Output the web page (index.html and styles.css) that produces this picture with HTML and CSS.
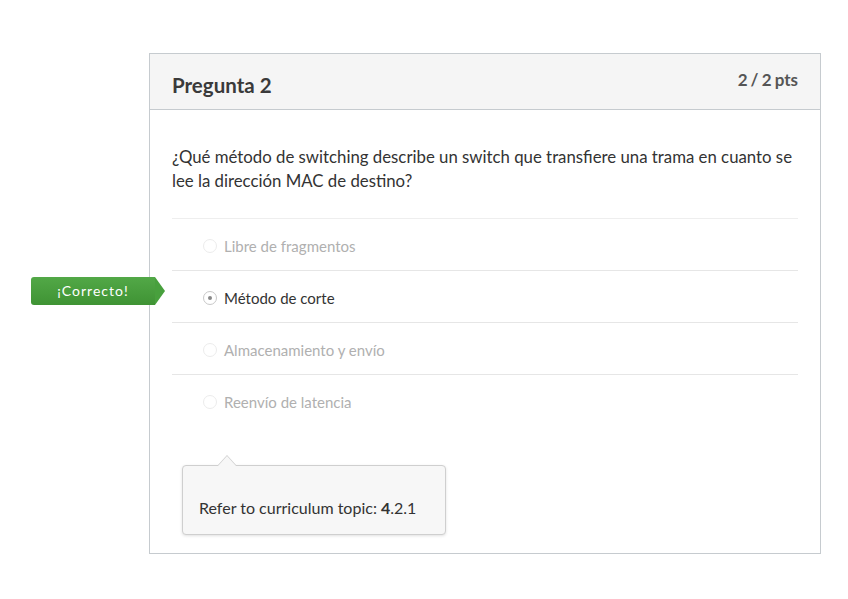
FILE: index.html
```html
<!DOCTYPE html>
<html lang="es">
<head>
<meta charset="utf-8">
<title>Pregunta 2</title>
<link rel="stylesheet" href="styles.css">
</head>
<body>
<div class="page">
  <div class="card">
    <div class="badge">¡Correcto!</div>
    <div class="card-header">
      <h2 class="title">Pregunta 2</h2>
      <div class="pts">2 / 2 pts</div>
    </div>
    <div class="question">¿Qué método de switching describe un switch que transfiere una trama en cuanto se lee la dirección MAC de destino?</div>
    <ul class="answers">
      <li class="answer"><span class="radio"></span>Libre de fragmentos</li>
      <li class="answer selected"><span class="radio"></span>Método de corte</li>
      <li class="answer"><span class="radio"></span>Almacenamiento y envío</li>
      <li class="answer"><span class="radio"></span>Reenvío de latencia</li>
    </ul>
    <div class="comment">
      <div class="bubble">Refer to curriculum topic: <b class="num">4</b>.2.1</div>
    </div>
  </div>
</div>
</body>
</html>
```
FILE: styles.css
```css
* { box-sizing: border-box; }
html, body { margin: 0; padding: 0; background: #fff; }
body { font-family: Lato, "Open Sans", sans-serif; color: #333; }
.page { padding: 53px 0 0 149px; }
.card {
  position: relative;
  width: 672px;
  height: 501px;
  border: 1px solid #c6cbcf;
  background: #fff;
}
.card-header {
  height: 56px;
  background: #f5f5f5;
  border-bottom: 1px solid #c6cbcf;
  display: flex;
  justify-content: space-between;
  padding: 0 22px;
}
.title {
  margin: 0;
  padding-top: 19px;
  font-size: 20.5px;
  font-weight: 700;
  line-height: 24px;
  color: #3a3a3a;
}
.pts {
  padding-top: 14px;
  font-size: 17px;
  font-weight: 700;
  line-height: 24px;
  color: #555;
  word-spacing: -1px;
}
.question {
  padding: 35px 22px 0;
  font-size: 16.8px;
  line-height: 24px;
  color: #333;
}
.answers {
  list-style: none;
  margin: 25px 22px 0;
  padding: 0;
}
.answer {
  height: 52px;
  border-top: 1px solid #e6e6e6;
  display: flex;
  align-items: center;
  padding: 2px 0 0 31px;
  font-size: 15px;
  color: #b0b0b0;
}
.answer:first-child { border-top-color: #eeeeee; }
.radio {
  width: 14px;
  height: 14px;
  border-radius: 50%;
  border: 1px solid #ececec;
  margin-right: 7px;
  position: relative;
  flex: none;
}
.selected { color: #333; }
.selected .radio { border-color: #c8c8c8; }
.selected .radio::after {
  content: "";
  position: absolute;
  left: 4px;
  top: 4px;
  width: 4px;
  height: 4px;
  border-radius: 50%;
  background: #888;
}
.comment { padding: 39px 0 0 32px; }
.bubble {
  position: relative;
  width: 264px;
  height: 70px;
  border: 1px solid #cfcfcf;
  border-radius: 4px;
  background: #f7f7f7;
  box-shadow: 0 1px 3px rgba(0,0,0,0.12);
  padding: 30px 0 0 16px;
  font-size: 16px;
  line-height: 24px;
  color: #333;
}
.num { font-weight: 700; }
.bubble::before {
  content: "";
  position: absolute;
  left: 34px;
  top: -11px;
  border: 10px solid transparent;
  border-top: 0;
  border-bottom: 11px solid #cfcfcf;
}
.bubble::after {
  content: "";
  position: absolute;
  left: 35px;
  top: -10px;
  border: 9px solid transparent;
  border-top: 0;
  border-bottom: 10px solid #f7f7f7;
}
.badge {
  position: absolute;
  left: -119px;
  top: 223px;
  width: 124px;
  height: 28px;
  background: linear-gradient(#52a847, #3f9334);
  border-radius: 3px 0 0 3px;
  color: #fff;
  font-size: 14px;
  line-height: 28px;
  text-align: center;
  letter-spacing: 1px;
}
.badge::after {
  content: "";
  position: absolute;
  right: -10px;
  top: 0;
  border-top: 14px solid transparent;
  border-bottom: 14px solid transparent;
  border-left: 10px solid #48a03d;
}
```
